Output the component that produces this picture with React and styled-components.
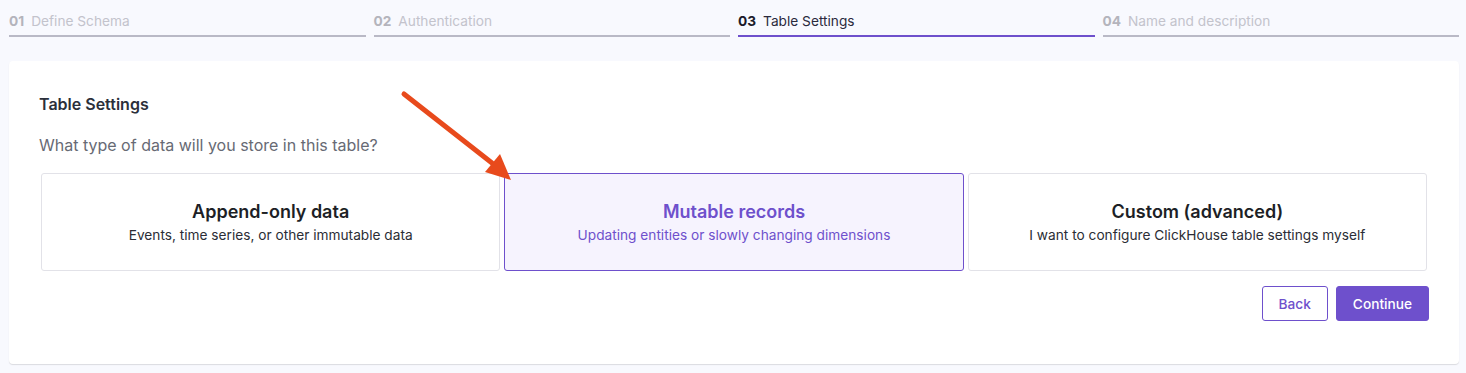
import React from 'react';
import styled, { createGlobalStyle } from 'styled-components';

const Global = createGlobalStyle`
  html, body { margin: 0; padding: 0; background: #f8f9fe; }
  body { font-family: Inter, "Noto Sans", sans-serif; }
`

const Page = styled.div`
  padding: 0 7px 0 9px;
  position: relative;
  height: 373px;
  box-sizing: border-box;
`

const Stepper = styled.div`
  display: grid;
  grid-template-columns: repeat(4, 1fr);
  gap: 8px;
  padding-top: 12px;
`

const Step = styled.div`
  font-size: 13.7px;
  line-height: 18px;
  padding-bottom: 5px;
  border-bottom: 2px solid ${p => p.$active ? '#6e50cc' : '#b9b9c6'};
  color: ${p => p.$active ? '#2a2a3c' : '#c3c3cc'};
  & b {
    font-weight: 700;
    margin-right: 7px;
    color: ${p => p.$active ? '#1b1b2a' : '#b4b4bc'};
  }
`

const Panel = styled.div`
  margin-top: 24px;
  background: #fff;
  border-radius: 4px;
  box-shadow: 0 1px 1px rgba(0,0,0,0.12);
  padding: 33px 30px 43px;
`

const Heading = styled.div`
  font-size: 16px;
  font-weight: 600;
  color: #2b2f3a;
  line-height: 20px;
`

const Question = styled.div`
  margin-top: 21px;
  font-size: 16px;
  color: #676a74;
  line-height: 20px;
`

const Options = styled.div`
  display: grid;
  grid-template-columns: repeat(3, 1fr);
  gap: 4px;
  margin: 18px 2px 0;
`

const Option = styled.div`
  height: 98px;
  box-sizing: border-box;
  border: 1px solid ${p => p.$selected ? '#6e50cc' : '#e2e2e8'};
  border-radius: 3px;
  background: ${p => p.$selected ? '#f6f3fe' : '#fff'};
  display: flex;
  flex-direction: column;
  align-items: center;
  justify-content: center;
  color: ${p => p.$selected ? '#6e50cc' : '#1d1f26'};
`

const Title = styled.div`
  font-size: 18px;
  font-weight: 600;
  line-height: 22px;
  margin-top: 1px;
`

const Sub = styled.div`
  font-size: 13.7px;
  line-height: 18px;
  margin-top: 3px;
  color: ${p => p.$selected ? '#6e50cc' : '#2b2d35'};
`

const Actions = styled.div`
  display: flex;
  justify-content: flex-end;
  gap: 8px;
  margin-top: 15px;
`

const Button = styled.button`
  height: 35px;
  padding: 0 16px;
  font-family: inherit;
  font-size: 13.7px;
  font-weight: 500;
  border-radius: 3px;
  border: 1px solid #6e50cc;
  background: ${p => p.$primary ? '#6e50cc' : '#fff'};
  color: ${p => p.$primary ? '#fff' : '#6e50cc'};
`

const Arrow = styled.svg`
  position: absolute;
  left: 0;
  top: 0;
  pointer-events: none;
`

const steps = [
  ['01', 'Define Schema'],
  ['02', 'Authentication'],
  ['03', 'Table Settings'],
  ['04', 'Name and description'],
]

const options = [
  ['Append-only data', 'Events, time series, or other immutable data'],
  ['Mutable records', 'Updating entities or slowly changing dimensions'],
  ['Custom (advanced)', 'I want to configure ClickHouse table settings myself'],
]

export default function App() {
  return (
    <>
      <Global />
      <Page>
        <Stepper>
          {steps.map(([n, label], i) => (
            <Step key={n} $active={i === 2}><b>{n}</b>{label}</Step>
          ))}
        </Stepper>
        <Panel>
          <Heading>Table Settings</Heading>
          <Question>What type of data will you store in this table?</Question>
          <Options>
            {options.map(([t, s], i) => (
              <Option key={t} $selected={i === 1}>
                <Title>{t}</Title>
                <Sub $selected={i === 1}>{s}</Sub>
              </Option>
            ))}
          </Options>
          <Actions>
            <Button>Back</Button>
            <Button $primary>Continue</Button>
          </Actions>
        </Panel>
        <Arrow width="1466" height="373">
          <line x1="404" y1="94" x2="492" y2="163" stroke="#e84a1c" strokeWidth="5" strokeLinecap="round" />
          <polygon points="511,180 485,172 500,154" fill="#e84a1c" />
        </Arrow>
      </Page>
    </>
  )
}
